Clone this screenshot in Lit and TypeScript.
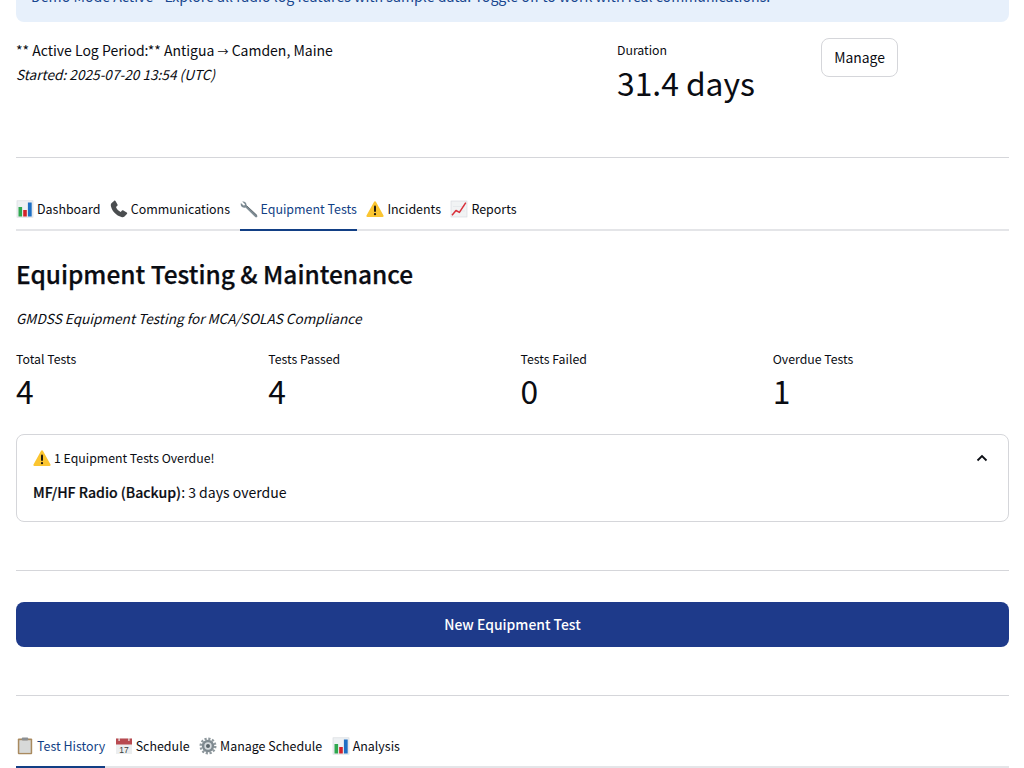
import { LitElement, html, css, svg } from "lit";
import { customElement } from "lit/decorators.js";

const icons: Record<string, unknown> = {
  chart: svg`<rect x="1" y=".8" width="16" height="16.400" fill="#eef1f3" stroke="#d3d8dc" stroke-width=".6"/><rect x="2.500" y="7" width="3.600" height="9.500" fill="#2fa84f"/><rect x="7.200" y="10" width="3.600" height="6.500" fill="#d3222a"/><rect x="11.900" y="2.500" width="3.800" height="14" fill="#1e6fc4"/>`,
  phone: svg`<path d="M1.400 3.300 4 .9c.6-.5 1.200-.4 1.500.2l2 3.300c.3.600.2 1-.2 1.400L6 7c.6 2 2.600 4.200 4.700 4.900l1.300-1.300c.4-.4 1-.4 1.400-.2l3.300 2c.6.300.7 1 .2 1.500l-2.400 2.500c-.8.800-2 1-3 .6C6 15.300 2.600 11.800 1 6.500c-.3-1.200-.3-2.400.4-3.200Z" fill="#4a4d4f"/>`,
  wrench: svg`<path d="M2.200 1.600 5 4.300 4.700 5.300 3.600 5.500.9 2.900C.4 4.800 1 6.500 2.500 7.300c1 .5 2.100.4 3 .1l9.700 9.600c.6.500 1.300.5 1.800 0 .5-.5.500-1.200 0-1.800L6.400 5.500c.3-1-.1-2.300-.8-3.100C4.700 1.500 3.300 1.200 2.200 1.600Z" fill="#7d8b93"/><path d="M6.400 5.500 16.900 15.300" stroke="#565f64" stroke-width=".8" fill="none"/>`,
  warn: svg`<path d="M9 1.300c.4 0 .7.200.9.500l7.600 13.700c.4.700-.1 1.500-.9 1.500H1.400c-.8 0-1.300-.8-.9-1.500L8.100 1.800c.2-.3.500-.5.900-.5Z" fill="#fbc531"/><rect x="8" y="5.600" width="2" height="6.400" rx="1" fill="#1f1a10"/><circle cx="9" cy="14.200" r="1.150" fill="#1f1a10"/>`,
  trend: svg`<rect x="1" y="1" width="16" height="16" fill="#f1f3f4" stroke="#d3d8dc" stroke-width=".6"/><path d="M3 6.500H15M3 11H15" stroke="#dfe3e6" stroke-width=".6"/><path d="M2 15.300 6 10.500 9.400 12.400 15.800 2.600" fill="none" stroke="#d9303a" stroke-width="1.500" stroke-linejoin="round"/>`,
  clip: svg`<rect x="1.800" y="1.500" width="14.400" height="15.800" rx="1" fill="#a98a5f"/><rect x="3.300" y="3.200" width="11.400" height="12.700" fill="#d7d9d8"/><rect x="5.800" y=".6" width="6.400" height="2.800" rx=".8" fill="#8b8f93"/>`,
  cal: svg`<rect x="1" y="1.500" width="16" height="15.500" fill="#eceeef"/><rect x="1" y="1.500" width="16" height="6" fill="#b84a50"/><rect x="3.500" y="1" width="1.200" height="3" fill="#eee"/><rect x="13.300" y="1" width="1.200" height="3" fill="#eee"/><text x="9" y="15.800" text-anchor="middle" font-size="8.500" font-family="Liberation Sans, sans-serif" fill="#3a3d40">17</text>`,
  gear: svg`<circle cx="9" cy="9" r="6.200" fill="#7f8a90"/><circle cx="9" cy="9" r="7.300" fill="none" stroke="#8e989d" stroke-width="2.400" stroke-dasharray="2.200 1.630"/><circle cx="9" cy="9" r="3.700" fill="#d6dbde"/><circle cx="9" cy="9" r="2" fill="#59646a"/>`,
};

const icon = (name: string) =>
  html`<svg class="ic" viewBox="0 0 18 18" width="18" height="18" aria-hidden="true">${icons[name]}</svg>`;

@customElement("app-root")
export class AppRoot extends LitElement {
  static styles = css`
    :host {
      display: block;
      height: 768px;
      overflow: hidden;
      background: #fff;
      color: #0a0c12;
      font-family: "Noto Sans CJK SC", "Noto Sans", sans-serif;
      font-size: 13.9px;
      line-height: 24px;
    }
    .page { padding: 0 15px 0 16px; }
    .banner {
      margin-top: -38px;
      height: 60px;
      box-sizing: border-box;
      padding: 22px 15px 0;
      background: #e7f0fb;
      border-radius: 8px;
      color: #17468f;
      font-size: 14.15px;
      white-space: nowrap;
    }
    .top {
      display: grid;
      grid-template-columns: 601px 204px auto;
      height: 135px;
      align-items: start;
    }
    .period { padding-top: 16px; font-size: 14px; }
    .period p { margin: 0; }
    .period p + p { margin-top: -1px; }
    .arrow { font-size: 11px; }
    em { font-style: italic; font-size: 13.65px; }
    .dur { padding-top: 19px; }
    .mlabel { font-size: 12.3px; line-height: 18px; display: block; }
    .mvalue { font-size: 31.8px; line-height: 48px; display: block; }
    .dur .mvalue { margin-top: -1px; }
    .metrics .mvalue { margin-top: -2px; }
    .manage {
      margin-top: 16px;
      width: 77px;
      height: 39px;
      box-sizing: border-box;
      padding: 0 0 2px;
      background: #fff;
      border: 1px solid #d5d6da;
      border-radius: 8px;
      font: inherit;
      color: inherit;
    }
    hr { border: 0; border-top: 1px solid #d5d6da; margin: 0; }
    .tabs {
      display: flex;
      gap: 9.5px;
      height: 42px;
      box-sizing: border-box;
      border-bottom: 2px solid #e4e5e8;
      font-size: 12.45px;
    }
    .tab {
      display: flex;
      align-items: center;
      gap: 3px;
      height: 42px;
      box-sizing: border-box;
      padding-bottom: 3px;
      white-space: nowrap;
    }
    .tab.on {
      color: #123f85;
      border-bottom: 2px solid #123f85;
      padding-bottom: 1px;
    }
    .ic { flex: none; display: block; }
    .t1 { margin-top: 31px; }
    h2 {
      margin: 25px 0 0;
      font-size: 24.45px;
      line-height: 36px;
      font-weight: 500;
      -webkit-text-stroke: 0.25px currentColor;
    }
    .sub { margin: 14px 0 0; font-style: italic; font-size: 13.6px; }
    .metrics {
      display: grid;
      grid-template-columns: repeat(4, 1fr);
      gap: 16px;
      margin-top: 20px;
    }
    .alert {
      margin-top: 20px;
      height: 88px;
      box-sizing: border-box;
      border: 1px solid #d5d6da;
      border-radius: 8px;
      padding: 12px 16px;
    }
    .ahead {
      display: flex;
      align-items: center;
      gap: 3px;
      font-size: 12.3px;
      height: 22px;
    }
    .ahead span { flex: 1; }
    .chev { width: 12px; height: 8px; margin-right: 4px; }
    .abody { margin: 11px 0 0; font-size: 14.05px; }
    strong { font-weight: 500; font-size: 14.1px; -webkit-text-stroke: 0.2px currentColor; }
    .d2 { margin-top: 48px; }
    .primary {
      display: block;
      width: 100%;
      height: 45px;
      margin-top: 31px;
      padding: 0 0 2px;
      border: 0;
      border-radius: 8px;
      background: #1e3a8a;
      color: #fff;
      font: inherit;
      font-weight: 500;
    }
    .d3 { margin-top: 48px; }
    .t2 { margin-top: 30px; }
  `;

  render() {
    return html`<div class="page">
      <div class="banner">Demo Mode Active - Explore all radio log features with sample data. Toggle off to work with real communications.</div>
      <div class="top">
        <div class="period">
          <p>** Active Log Period:** Antigua <span class="arrow">→</span> Camden, Maine</p>
          <p><em>Started: 2025-07-20 13:54 (UTC)</em></p>
        </div>
        <div class="dur"><span class="mlabel">Duration</span><span class="mvalue">31.4 days</span></div>
        <button class="manage">Manage</button>
      </div>
      <hr />
      <div class="tabs t1">
        <div class="tab">${icon("chart")}Dashboard</div>
        <div class="tab">${icon("phone")}Communications</div>
        <div class="tab on">${icon("wrench")}Equipment Tests</div>
        <div class="tab">${icon("warn")}Incidents</div>
        <div class="tab">${icon("trend")}Reports</div>
      </div>
      <h2>Equipment Testing &amp; Maintenance</h2>
      <p class="sub">GMDSS Equipment Testing for MCA/SOLAS Compliance</p>
      <div class="metrics">
        ${[["Total Tests", "4"], ["Tests Passed", "4"], ["Tests Failed", "0"], ["Overdue Tests", "1"]].map(
          ([l, v]) => html`<div><span class="mlabel">${l}</span><span class="mvalue">${v}</span></div>`
        )}
      </div>
      <div class="alert">
        <div class="ahead">
          ${icon("warn")}<span>1 Equipment Tests Overdue!</span>
          <svg class="chev" viewBox="0 0 12 8"><path d="M1.500 6.500 6 2l4.500 4.500" fill="none" stroke="#0b0e14" stroke-width="1.800"/></svg>
        </div>
        <p class="abody"><strong>MF/HF Radio (Backup)</strong>: 3 days overdue</p>
      </div>
      <hr class="d2" />
      <button class="primary">New Equipment Test</button>
      <hr class="d3" />
      <div class="tabs t2">
        <div class="tab on">${icon("clip")}Test History</div>
        <div class="tab">${icon("cal")}Schedule</div>
        <div class="tab">${icon("gear")}Manage Schedule</div>
        <div class="tab">${icon("chart")}Analysis</div>
      </div>
    </div>`;
  }
}
